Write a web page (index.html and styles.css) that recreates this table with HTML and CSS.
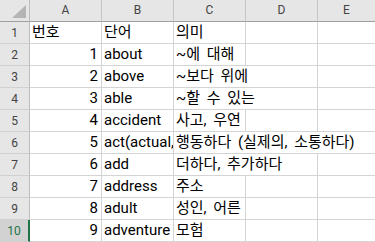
FILE: index.html
```html
<!DOCTYPE html>
<html lang="ko">
<head>
<meta charset="utf-8">
<link rel="stylesheet" href="styles.css">
</head>
<body>
<div class="sheet">
  <div class="corner"><span class="tri"></span></div>
  <div class="colh">A</div><div class="colh">B</div><div class="colh">C</div><div class="colh">D</div><div class="colh last">E</div>

  <div class="rowh">1</div><div class="cell">번호</div><div class="cell">단어</div><div class="cell ko">의미</div><div class="cell"></div><div class="cell last"></div>
  <div class="rowh">2</div><div class="cell num">1</div><div class="cell">about</div><div class="cell ko">~에 대해</div><div class="cell"></div><div class="cell last"></div>
  <div class="rowh">3</div><div class="cell num">2</div><div class="cell">above</div><div class="cell ko span2">~보다 위에</div><div class="cell last"></div>
  <div class="rowh">4</div><div class="cell num">3</div><div class="cell">able</div><div class="cell ko span2">~할 수 있는</div><div class="cell last"></div>
  <div class="rowh">5</div><div class="cell num">4</div><div class="cell">accident</div><div class="cell ko">사고, 우연</div><div class="cell"></div><div class="cell last"></div>
  <div class="rowh">6</div><div class="cell num">5</div><div class="cell">act(actual, ...</div><div class="cell ko span3 last">행동하다 (실제의, 소통하다)</div>
  <div class="rowh">7</div><div class="cell num">6</div><div class="cell">add</div><div class="cell ko span2">더하다, 추가하다</div><div class="cell last"></div>
  <div class="rowh">8</div><div class="cell num">7</div><div class="cell">address</div><div class="cell ko">주소</div><div class="cell"></div><div class="cell last"></div>
  <div class="rowh">9</div><div class="cell num">8</div><div class="cell">adult</div><div class="cell ko">성인, 어른</div><div class="cell"></div><div class="cell last"></div>
  <div class="rowh sel">10</div><div class="cell num">9</div><div class="cell">adventure</div><div class="cell ko">모험</div><div class="cell"></div><div class="cell last"></div>
</div>
</body>
</html>
```
FILE: styles.css
```css
html, body {
  margin: 0;
  padding: 0;
  background: #ffffff;
}
.sheet {
  display: grid;
  grid-template-columns: 30px 72px 72px 72px 72px 57px;
  grid-template-rows: repeat(11, 22px);
  width: 375px;
  height: 242px;
  overflow: hidden;
  font-family: Roboto, "Noto Sans CJK KR", sans-serif;
}
.corner {
  position: relative;
  background: #e6e6e6;
  border-right: 1px solid #bdbdbd;
  border-bottom: 1px solid #9f9f9f;
}
.tri {
  position: absolute;
  left: 12px;
  top: 5px;
  width: 0;
  height: 0;
  border-style: solid;
  border-width: 0 0 13px 14px;
  border-color: transparent transparent #b5b5b5 transparent;
}
.colh {
  background: #e6e6e6;
  border-right: 1px solid #c4c4c4;
  border-bottom: 1px solid #9f9f9f;
  color: #444444;
  font-size: 12px;
  line-height: 21px;
  text-align: center;
}
.colh.last {
  border-right: none;
}
.rowh {
  background: #e6e6e6;
  border-right: 1px solid #bdbdbd;
  border-bottom: 1px solid #d0d0d0;
  color: #444444;
  font-size: 12px;
  line-height: 22px;
  text-align: center;
}
.rowh.sel {
  background: #d2d2d2;
  color: #217346;
  border-right: 2px solid #217346;
}
.cell {
  border-right: 1px solid #d4d4d4;
  border-bottom: 1px solid #d4d4d4;
  color: #000000;
  font-size: 15px;
  line-height: 21px;
  padding: 0 2px;
  white-space: nowrap;
  overflow: hidden;
}
.cell.ko {
  word-spacing: 3px;
}
.cell.num {
  text-align: right;
  padding-right: 3px;
}
.cell.last {
  border-right: none;
}
.span2 {
  grid-column: span 2;
}
.span3 {
  grid-column: span 3;
}
```
